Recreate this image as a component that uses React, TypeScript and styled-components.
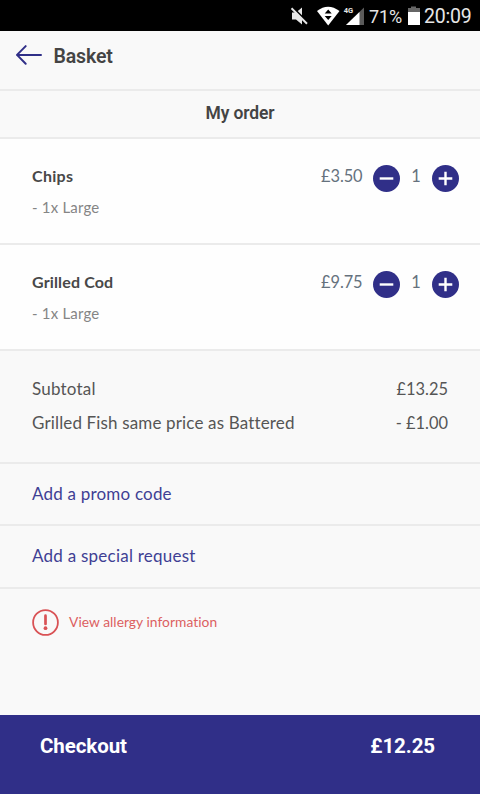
import React from "react";
import styled, { createGlobalStyle } from "styled-components";

const indigo = "#302f88";

const GlobalStyle = createGlobalStyle`
  *, *::before, *::after { box-sizing: border-box; }
  body { margin: 0; background: #f9f9f9; }
`;

const Screen = styled.main`
  width: 480px;
  height: 794px;
  display: flex;
  flex-direction: column;
  overflow: hidden;
  background: #f9f9f9;
  color: #454545;
  font-family: Roboto, sans-serif;
`;

const StatusBar = styled.div`
  height: 31px;
  flex: none;
  background: #000;
  display: flex;
  align-items: center;
  justify-content: flex-end;
  padding: 3px 8px 0 0;
  color: #e6e6e6;
`;

const StatusIcons = styled.svg`
  display: block;
  flex: none;
  margin-top: -3px;
`;

const StatusText = styled.span<{ $size: number; $width: number; $track: number }>`
  width: ${(p) => p.$width}px;
  flex: none;
  font-size: ${(p) => p.$size}px;
  letter-spacing: ${(p) => p.$track}px;
  line-height: 28px;
  white-space: nowrap;
`;

const Label = styled.span<{ $size: number; $track?: number; $color?: string; $bold?: boolean }>`
  font-family: Lato, sans-serif;
  font-size: ${(p) => p.$size}px;
  letter-spacing: ${(p) => p.$track ?? 0}px;
  font-variant-ligatures: none;
  font-weight: ${(p) => (p.$bold ? 700 : 400)};
  color: ${(p) => p.$color ?? "#555555"};
  line-height: 24px;
  white-space: nowrap;
`;

const Header = styled.header`
  height: 60px;
  flex: none;
  display: flex;
  align-items: flex-start;
  padding: 13px 0 0 15px;
  gap: 10.5px;
  border-bottom: 2px solid #ebebeb;
`;

const Title = styled.h1`
  margin: 0;
  padding-top: 1px;
  font-size: 19.5px;
  letter-spacing: -0.15px;
  line-height: 24px;
  font-weight: 600;
  color: #444;
`;

const SectionTitle = styled.h2`
  margin: 0;
  height: 48px;
  flex: none;
  padding-top: 10px;
  text-align: center;
  font-size: 17.5px;
  letter-spacing: -0.15px;
  line-height: 24px;
  font-weight: 600;
  color: #444;
  border-bottom: 2px solid #ebebeb;
`;

const Item = styled.section`
  height: 106px;
  flex: none;
  display: flex;
  justify-content: space-between;
  padding: 25px 21px 0 32px;
  background: #fefefe;
  border-bottom: 2px solid #ebebeb;
`;

const ItemText = styled.div`
  display: flex;
  flex-direction: column;
  gap: 7px;
`;

const Controls = styled.div`
  display: flex;
  align-items: flex-start;
`;

const Quantity = styled(Label)`
  width: 32px;
  text-align: center;
`;

const RoundButton = styled.button`
  width: 27px;
  height: 27px;
  margin: 1px 0 0;
  padding: 0;
  border: 0;
  border-radius: 50%;
  background: ${indigo};
  display: grid;
  place-items: center;
`;

const Price = styled(Label)`
  margin-right: 10.5px;
`;

const Totals = styled.section`
  height: 113px;
  flex: none;
  display: flex;
  flex-direction: column;
  gap: 10px;
  padding: 26px 32px 0;
  border-bottom: 2px solid #ebebeb;
`;

const TotalRow = styled.div`
  display: flex;
  justify-content: space-between;
`;

const LinkRow = styled.div<{ $height: number }>`
  height: ${(p) => p.$height}px;
  flex: none;
  padding: 18px 32px 0;
  border-bottom: 2px solid #ebebeb;
`;

const Allergy = styled.div`
  flex: 1;
  display: flex;
  align-items: flex-start;
  gap: 10px;
  padding: 20px 32px 0;
`;

const AllergyText = styled(Label)`
  padding-top: 1px;
`;

const Checkout = styled.footer`
  height: 79px;
  flex: none;
  display: flex;
  justify-content: space-between;
  padding: 19px 45px 0 40px;
  background: ${indigo};
  color: #fff;
  font-size: 20.5px;
  letter-spacing: -0.08px;
  line-height: 24px;
  font-weight: 700;
`;

const StepIcon = ({ plus }: { plus?: boolean }) => (
  <svg width="27" height="27" viewBox="0 0 27 27" fill="none" stroke="#fff" strokeWidth="2.4">
    <path d={plus ? "M6.7 13.5H20.3M13.5 6.7V20.3" : "M6.7 13.5H20.3"} />
  </svg>
);

type BasketItem = { name: string; option: string; price: string; track: number };

const items: BasketItem[] = [
  { name: "Chips", option: "- 1x Large", price: "£3.50", track: 0.3 },
  { name: "Grilled Cod", option: "- 1x Large", price: "£9.75", track: 0.15 },
];

export default function App() {
  return (
    <>
      <GlobalStyle />
      <Screen>
        <StatusBar>
          <StatusIcons width="79" height="31" viewBox="290 0 79 31">
            <path d="M292 12.5h4l6-5v17l-6-5h-4z" fill="#e6e6e6" />
            <path d="M293 7.700l15 15" stroke="#000" strokeWidth="2" />
            <path d="M291.500 8.200l15.500 15.500" stroke="#e6e6e6" strokeWidth="2" />
            <path d="M317 11Q328 2.500 339.500 11L328.200 25.500z" fill="#fff" />
            <path d="M324.700 13.500h7l-3.500-4zM324.700 16h7l-3.500 4z" fill="#000" />
            <path d="M364 7.500v17.500h-18z" fill="#5b5b5b" />
            <path d="M359.500 12v13h-13.500z" fill="#fff" />
            <text x="343.800" y="13" fontFamily="Roboto" fontWeight="700" fontSize="7.500" fill="#e6e6e6">4G</text>
          </StatusIcons>
          <StatusText $size={18} $width={35} $track={-0.15}>71%</StatusText>
          <StatusIcons width="20" height="31" viewBox="404 0 20 31">
            <path d="M408 9V8h3V6.500h5V8h4v4h-12z" fill="#666" />
            <path d="M408 12h12v13h-12z" fill="#fff" />
          </StatusIcons>
          <StatusText $size={19.5} $width={48} $track={-0.2}>20:09</StatusText>
        </StatusBar>
        <Header>
          <svg width="28" height="24" viewBox="15 43 28 24" fill="none" stroke={indigo} strokeWidth="2" strokeLinecap="round" strokeLinejoin="round">
            <path d="M41 53.900H17M25.700 45.100L17 53.900L25.700 62.700" />
          </svg>
          <Title>Basket</Title>
        </Header>
        <SectionTitle>My order</SectionTitle>
        {items.map((item) => (
          <Item key={item.name}>
            <ItemText>
              <Label as="strong" $size={16} $track={item.track} $bold $color="#484848">{item.name}</Label>
              <Label $size={15} $track={0.2} $color="#858585">{item.option}</Label>
            </ItemText>
            <Controls>
              <Price $size={16.4} $track={-0.1} $color="#65717d">{item.price}</Price>
              <RoundButton aria-label="Remove one"><StepIcon /></RoundButton>
              <Quantity $size={16.4} $color="#65717d">1</Quantity>
              <RoundButton aria-label="Add one"><StepIcon plus /></RoundButton>
            </Controls>
          </Item>
        ))}
        <Totals>
          <TotalRow>
            <Label $size={17} $track={0.2}>Subtotal</Label>
            <Label $size={16.4}>£13.25</Label>
          </TotalRow>
          <TotalRow>
            <Label $size={17} $track={0.15}>Grilled Fish same price as Battered</Label>
            <Label $size={16.4}>- £1.00</Label>
          </TotalRow>
        </Totals>
        <LinkRow $height={62}>
          <Label $size={17} $track={0.2} $color="#403f94">Add a promo code</Label>
        </LinkRow>
        <LinkRow $height={63}>
          <Label $size={17} $track={0.24} $color="#403f94">Add a special request</Label>
        </LinkRow>
        <Allergy>
          <svg width="27" height="27" viewBox="0 0 27 27" fill="none" stroke="#d95255" strokeWidth="1.8" strokeLinecap="round">
            <circle cx="13.500" cy="13.500" r="12.400" />
            <path d="M13.500 6.700V15" strokeWidth="2.700" />
            <circle cx="13.500" cy="19.200" r="1.900" fill="#d95255" stroke="none" />
          </svg>
          <AllergyText $size={13.8} $track={0.04} $color="#dc5f61">View allergy information</AllergyText>
        </Allergy>
        <Checkout>
          <span>Checkout</span>
          <span>£12.25</span>
        </Checkout>
      </Screen>
    </>
  );
}
